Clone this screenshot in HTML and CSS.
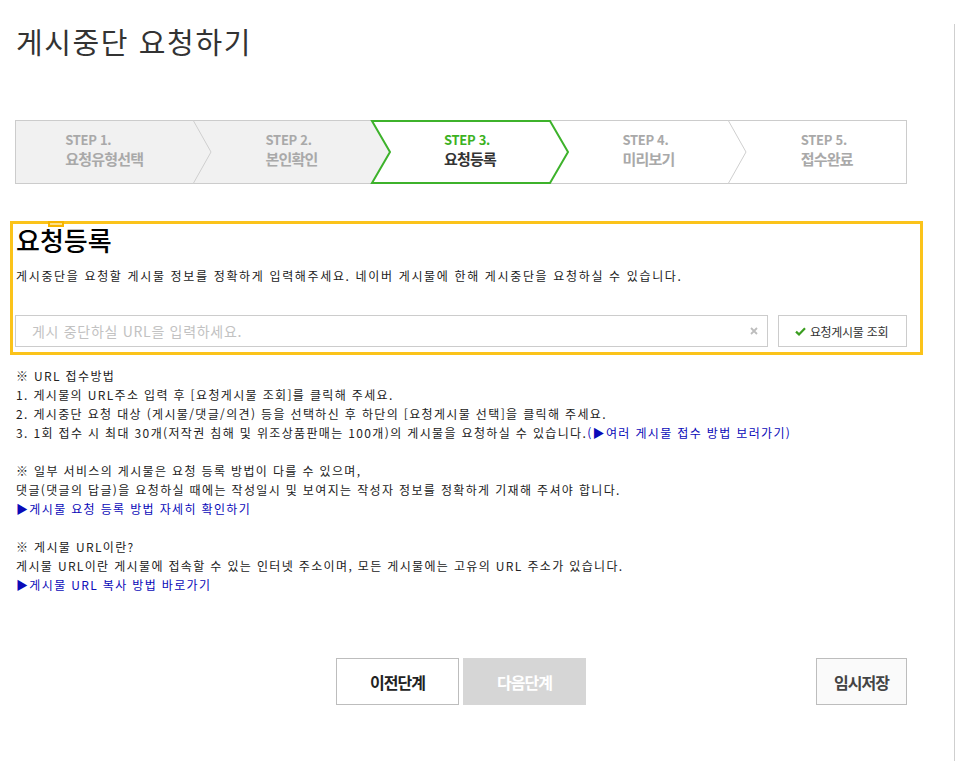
FILE: index.html
```html
<!DOCTYPE html>
<html lang="ko">
<head>
<meta charset="utf-8">
<title>게시중단 요청하기</title>
<link rel="stylesheet" href="styles.css">
</head>
<body>
<div class="page">
  <h1 class="title">게시중단 요청하기</h1>

  <div class="steps">
    <svg class="steps-bg" width="892" height="64" viewBox="0 0 892 64" aria-hidden="true">
      <rect x="0.5" y="0.5" width="891" height="63" fill="#fff" stroke="#cccccc"/>
      <polygon points="1,1 357,1 375,32 357,63 1,63" fill="#f1f1f1"/>
      <polyline points="178,0 196,32 178,64" fill="none" stroke="#cfcfcf"/>
      <polyline points="713,0 731,32 713,64" fill="none" stroke="#cfcfcf"/>
      <polygon points="357,1 535,1 553,32 535,63 357,63 375,32" fill="#fff" stroke="#3db22b" stroke-width="2"/>
    </svg>
    <ol class="step-list">
      <li class="step"><div class="step-inner"><span class="step-no">STEP 1.</span><span class="step-name">요청유형선택</span></div></li>
      <li class="step notch"><div class="step-inner"><span class="step-no">STEP 2.</span><span class="step-name">본인확인</span></div></li>
      <li class="step notch current"><div class="step-inner"><span class="step-no">STEP 3.</span><span class="step-name">요청등록</span></div></li>
      <li class="step notch"><div class="step-inner"><span class="step-no">STEP 4.</span><span class="step-name">미리보기</span></div></li>
      <li class="step notch"><div class="step-inner"><span class="step-no">STEP 5.</span><span class="step-name">접수완료</span></div></li>
    </ol>
  </div>

  <section class="register">
    <span class="tab-mark"></span>
    <h2 class="register-title">요청등록</h2>
    <p class="desc">게시중단을 요청할 게시물 정보를 정확하게 입력해주세요. 네이버 게시물에 한해 게시중단을 요청하실 수 있습니다.</p>
    <div class="url-row">
      <div class="url-input">
        <input class="url-field" type="text" placeholder="게시 중단하실 URL을 입력하세요.">
        <span class="clear">
          <svg width="8" height="8" viewBox="0 0 8 8" aria-hidden="true"><path d="M1 1 L7 7 M7 1 L1 7" stroke="#bdbdbd" stroke-width="1.8" fill="none"/></svg>
        </span>
      </div>
      <button class="lookup" type="button">
        <svg class="check" width="11" height="9" viewBox="0 0 11 9" aria-hidden="true"><path d="M1 4.6 L4 7.4 L10 1.2" stroke="#3a9d1f" stroke-width="2.2" fill="none"/></svg>
        <span>요청게시물 조회</span>
      </button>
    </div>
  </section>

  <div class="notes">
    <p>※ URL 접수방법<br>
    1. 게시물의 URL주소 입력 후 [요청게시물 조회]를 클릭해 주세요.<br>
    2. 게시중단 요청 대상 (게시물/댓글/의견) 등을 선택하신 후 하단의 [요청게시물 선택]을 클릭해 주세요.<br>
    3. 1회 접수 시 최대 30개(저작권 침해 및 위조상품판매는 100개)의 게시물을 요청하실 수 있습니다.<a class="link" href="#">(▶여러 게시물 접수 방법 보러가기)</a></p>
    <p>※ 일부 서비스의 게시물은 요청 등록 방법이 다를 수 있으며,<br>
    댓글(댓글의 답글)을 요청하실 때에는 작성일시 및 보여지는 작성자 정보를 정확하게 기재해 주셔야 합니다.<br>
    <a class="link" href="#">▶게시물 요청 등록 방법 자세히 확인하기</a></p>
    <p>※ 게시물 URL이란?<br>
    게시물 URL이란 게시물에 접속할 수 있는 인터넷 주소이며, 모든 게시물에는 고유의 URL 주소가 있습니다.<br>
    <a class="link" href="#">▶게시물 URL 복사 방법 바로가기</a></p>
  </div>

  <div class="actions">
    <div class="nav-btns">
      <button class="btn btn-prev" type="button">이전단계</button>
      <button class="btn btn-next" type="button">다음단계</button>
    </div>
    <button class="btn btn-save" type="button">임시저장</button>
  </div>
</div>
</body>
</html>
```

FILE: styles.css
```css
html, body {
  margin: 0;
  padding: 0;
  background: #fff;
}

body {
  font-family: "Noto Sans CJK KR", "Noto Sans", sans-serif;
  color: #333;
}

.page {
  width: 955px;
  min-height: 761px;
  box-sizing: border-box;
  border-right: 1px solid #cfcfcf;
  padding-left: 15px;
}

.title {
  margin: 24px 0 0 1px;
  font-size: 29px;
  line-height: 34px;
  font-weight: 400;
  color: #333;
  letter-spacing: 1.6px;
}

/* steps */
.steps {
  position: relative;
  width: 892px;
  height: 64px;
  margin-top: 62px;
}

.steps-bg {
  position: absolute;
  left: 0;
  top: 0;
  display: block;
}

.step-list {
  position: relative;
  list-style: none;
  margin: 0;
  padding: 0;
  display: grid;
  grid-template-columns: repeat(5, 1fr);
  height: 64px;
}

.step {
  display: flex;
  justify-content: center;
  padding-top: 12px;
  box-sizing: border-box;
}

.step.notch {
  padding-left: 18px;
}

.step-inner {
  display: flex;
  flex-direction: column;
  align-items: flex-start;
  gap: 1px;
}

.step-no {
  font-size: 13px;
  line-height: 16px;
  font-weight: 700;
  color: #a9a9a9;
  letter-spacing: -0.3px;
}

.step-name {
  font-size: 15px;
  line-height: 20px;
  font-weight: 700;
  color: #a9a9a9;
  letter-spacing: -0.8px;
}

.step.current .step-no {
  color: #3cb21f;
}

.step.current .step-name {
  color: #333;
}

/* register box */
.register {
  position: relative;
  margin: 37px 0 0 -5px;
  width: 913px;
  box-sizing: border-box;
  border: 3px solid #fbc31a;
  padding: 1px 13px 5px 2px;
}

.tab-mark {
  position: absolute;
  left: 35px;
  top: -3px;
  width: 16px;
  height: 6px;
  box-sizing: border-box;
  background: #fde08a;
  border: 2px solid #f7b500;
}

.register-title {
  margin: 0 0 0 1px;
  font-size: 26px;
  line-height: 30px;
  font-weight: 500;
  color: #000;
}

.desc {
  margin: 12px 0 0 1px;
  font-size: 12px;
  line-height: 18px;
  letter-spacing: 1.65px;
  color: #222;
}

.url-row {
  display: flex;
  gap: 10px;
  margin-top: 30px;
}

.url-input {
  display: flex;
  align-items: center;
  width: 753px;
  height: 32px;
  box-sizing: border-box;
  border: 1px solid #cccccc;
  background: #fff;
}

.url-field {
  flex: 1;
  border: 0;
  outline: none;
  height: 30px;
  padding: 0 0 0 16px;
  font-family: "Noto Sans CJK KR", sans-serif;
  font-size: 14px;
  letter-spacing: 0.7px;
  color: #333;
  background: transparent;
}

.url-field::placeholder {
  color: #c2c2c2;
}

.clear {
  display: flex;
  width: 8px;
  height: 8px;
  margin-right: 9px;
}

.lookup {
  display: flex;
  align-items: center;
  justify-content: center;
  gap: 4px;
  width: 129px;
  height: 32px;
  box-sizing: border-box;
  border: 1px solid #cccccc;
  background: #fff;
  padding: 0 2px 0 0;
  font-family: "Noto Sans CJK KR", sans-serif;
  font-size: 12px;
  letter-spacing: -0.3px;
  color: #333;
}

.check {
  display: block;
}

/* notes */
.notes {
  margin-top: 11px;
  font-size: 12px;
  line-height: 19px;
  letter-spacing: 1.35px;
  color: #222;
  padding-left: 1px;
}

.notes p {
  margin: 0 0 19px;
}

.notes p:last-child {
  margin-bottom: 0;
}

.link {
  color: #0a0ab8;
  text-decoration: none;
}

/* actions */
.actions {
  display: grid;
  grid-template-columns: 1fr auto 1fr;
  width: 892px;
  margin-top: 64px;
}

.nav-btns {
  grid-column: 2;
  display: flex;
  gap: 4px;
}

.btn {
  height: 47px;
  box-sizing: border-box;
  font-family: "Noto Sans CJK KR", sans-serif;
  font-size: 16px;
  font-weight: 700;
  letter-spacing: -1px;
  padding: 0;
}

.btn-prev {
  width: 123px;
  border: 1px solid #bdbdbd;
  background: #fff;
  color: #222;
}

.btn-next {
  width: 123px;
  border: 0;
  background: #d6d6d6;
  color: #fff;
}

.btn-save {
  grid-column: 3;
  justify-self: end;
  width: 91px;
  border: 1px solid #bdbdbd;
  background: #fafafa;
  color: #444;
}
```
